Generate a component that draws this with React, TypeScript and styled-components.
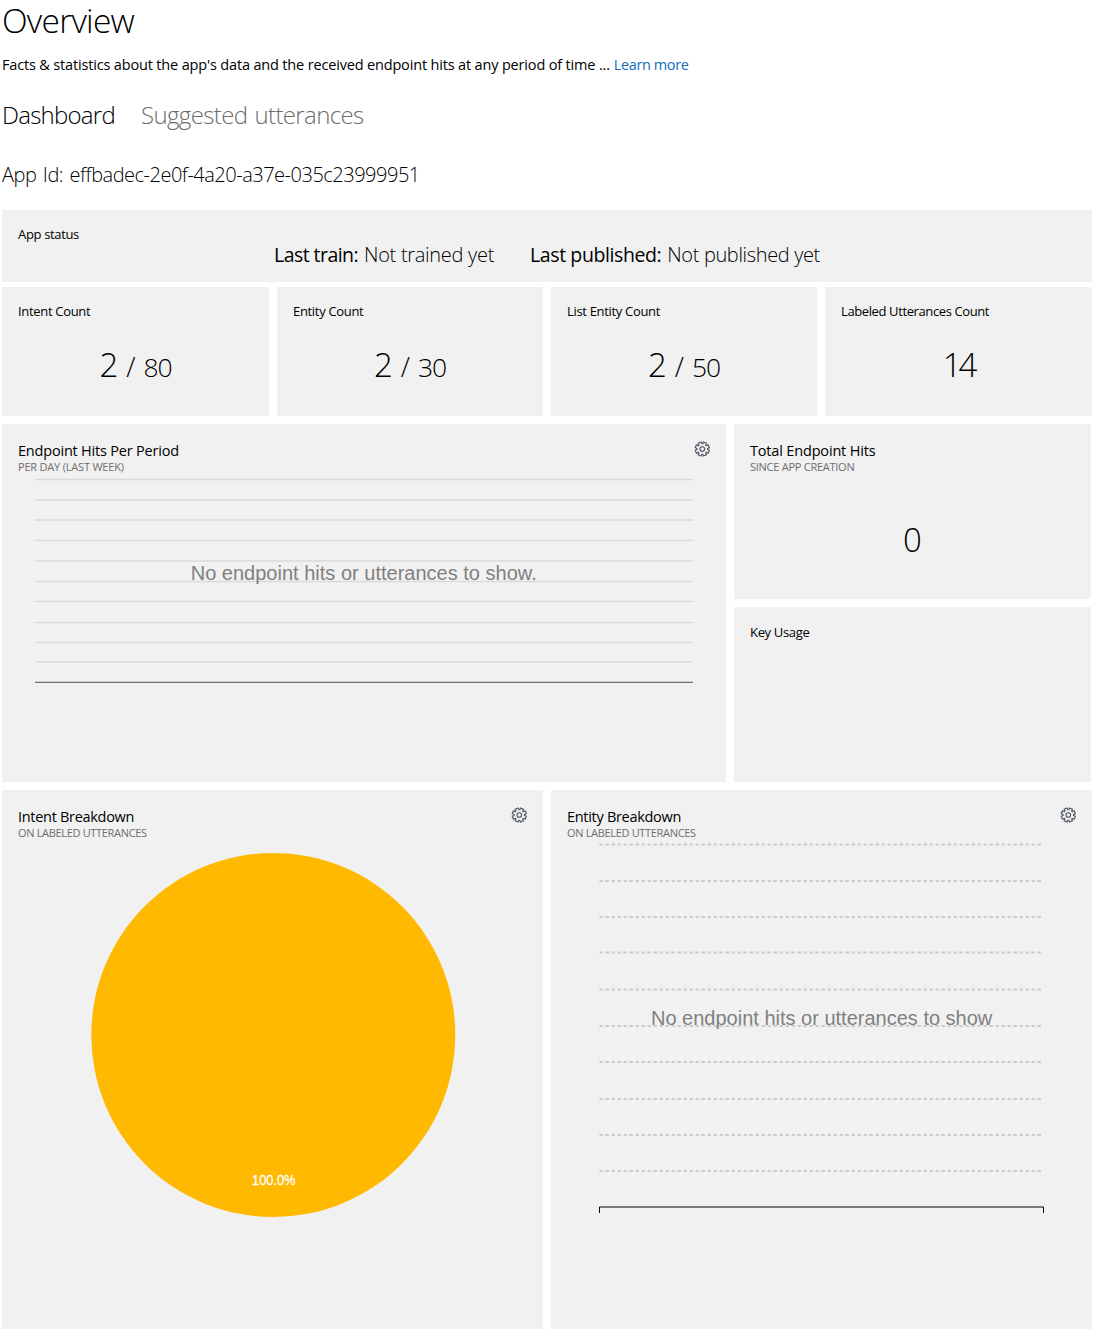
import React from "react";
import styled, { createGlobalStyle } from "styled-components";

const Global = createGlobalStyle`
  * { box-sizing: border-box; }
  html, body { margin: 0; background: #fff; }
  body { font-family: "Open Sans", "Noto Sans", sans-serif; color: #000; }
  h1, h2, p { margin: 0; font-weight: 400; }
`;

const Page = styled.main`
  width: 1094px;
  height: 1336px;
  padding: 0 2px;
  white-space: nowrap;
`;
const Text = styled.span<{ $size: number; $weight?: number; $spacing?: number; $words?: number; $color?: string }>`
  font-size: ${(p) => p.$size}px;
  font-weight: ${(p) => p.$weight ?? 400};
  letter-spacing: ${(p) => p.$spacing ?? 0}px;
  word-spacing: ${(p) => p.$words ?? 0}px;
  color: ${(p) => p.$color ?? "inherit"};
`;
const Title = styled.h1`
  display: flex;
  height: 55px;
  line-height: 40px;
`;
const Intro = styled.p`
  display: flex;
  gap: 4px;
  height: 44px;
  line-height: 20px;
`;
const Link = styled.a`
  display: flex;
  color: #0f6fbe;
`;
const Tabs = styled.nav`
  display: flex;
  gap: 26px;
  height: 62px;
  line-height: 31px;
`;
const AppId = styled.p`
  display: flex;
  height: 49px;
  line-height: 28px;
`;
const Card = styled.section<{ $height?: number }>`
  display: flex;
  flex-direction: column;
  height: ${(p) => (p.$height ? `${p.$height}px` : "auto")};
  padding: 14px 16px 0;
  background: #f1f1f1;
`;
const Label = styled.h2<{ $drop?: number }>`
  display: flex;
  height: 20px;
  margin-top: ${(p) => p.$drop ?? 0}px;
  line-height: 20px;
`;
const Status = styled.div`
  display: flex;
  justify-content: center;
  gap: 36px;
  margin-top: -1px;
  line-height: 24px;
`;
const StatusItem = styled.div`
  display: flex;
  gap: 6px;
`;
const Row = styled.div<{ $cols: string; $top?: number; $height: number }>`
  display: grid;
  grid-template-columns: ${(p) => p.$cols};
  grid-template-rows: 100%;
  gap: 8px;
  height: ${(p) => p.$height}px;
  margin-top: ${(p) => p.$top ?? 8}px;
`;
const Stack = styled.div`
  display: grid;
  grid-template-rows: 1fr 1fr;
  gap: 8px;
`;
const Count = styled.div<{ $top: number }>`
  display: flex;
  justify-content: center;
  align-items: baseline;
  gap: 8px;
  margin-top: ${(p) => p.$top}px;
  line-height: 46px;
`;
const Head = styled.header`
  display: flex;
  justify-content: space-between;
  height: 36px;
  padding-top: 3px;
`;
const Heading = styled.div`
  display: flex;
  flex-direction: column;
`;
const HeadTitle = styled.h2`
  display: flex;
  height: 19px;
  line-height: 19px;
`;
const SubTitle = styled.p`
  display: flex;
  height: 14px;
  line-height: 14px;
`;
const Chart = styled.svg`
  display: block;
  overflow: visible;
`;
const GearIcon = styled.svg`
  display: block;
  width: 16px;
  height: 16px;
  margin-top: 0.4px;
`;

const TEETH = 8;
const gearPath =
  Array.from({ length: TEETH }, (_, i) => {
    const angle = ((i + 0.5) * 2 * Math.PI) / TEETH - Math.PI / 2;
    const corners = [[7.2, -0.23], [7.2, 0.23], [5.2, 0.3], [5.2, 0.485]];
    return corners
      .map(([r, o]) => `${(8.3 + r * Math.cos(angle + o)).toFixed(2)} ${(8 + r * Math.sin(angle + o)).toFixed(2)}`)
      .join("L");
  }).reduce((path, part) => `${path}${path ? "L" : "M"}${part}`, "") + "Z";

function Gear() {
  return (
    <GearIcon viewBox="0 0 16 16" fill="none" stroke="#4a525e" strokeWidth="1.1" strokeLinejoin="round">
      <path d={gearPath} />
      <circle cx="8.3" cy="8" r="2.3" />
    </GearIcon>
  );
}

function CardHead({ title, sub, s1, s2, gear }: { title: string; sub: string; s1: number; s2: number; gear?: boolean }) {
  return (
    <Head>
      <Heading>
        <HeadTitle><Text $size={14.5} $spacing={s1}>{title}</Text></HeadTitle>
        <SubTitle><Text $size={11} $spacing={s2} $color="#6e6e6e">{sub}</Text></SubTitle>
      </Heading>
      {gear && <Gear />}
    </Head>
  );
}

function CountCard({ label, value, limit, spacing = -0.32 }: { label: string; value: string; limit?: string; spacing?: number }) {
  return (
    <Card>
      <Label><Text $size={13} $spacing={spacing}>{label}</Text></Label>
      <Count $top={21}>
        <Text $size={33} $weight={300} $spacing={limit ? 0 : -3}>{value}</Text>
        {limit && (
          <>
            <Text $size={27} $weight={300}>/</Text>
            <Text $size={26.5} $weight={300} $spacing={-1.1}>{limit}</Text>
          </>
        )}
      </Count>
    </Card>
  );
}

const hitLines = [479.5, 500, 520, 540.5, 561, 581.5, 601.5, 622.5, 642.5, 662];
const entityLines = [844.5, 881, 917, 952.5, 989.5, 1026, 1062, 1099, 1135, 1171];

export default function App() {
  return (
    <Page>
      <Global />
      <Title><Text $size={33.5} $weight={300} $spacing={-0.75}>Overview</Text></Title>
      <Intro>
        <Text $size={14.5} $spacing={-0.165}>Facts &amp; statistics about the app's data and the received endpoint hits at any period of time ...</Text>
        <Link><Text $size={14.5} $spacing={-0.4}>Learn more</Text></Link>
      </Intro>
      <Tabs>
        <Text $size={24} $weight={300} $spacing={-0.75}>Dashboard</Text>
        <Text $size={24} $weight={300} $spacing={-0.63} $words={1.5} $color="#6c6c6c">Suggested utterances</Text>
      </Tabs>
      <AppId><Text $size={20} $weight={300} $spacing={-0.49} $words={1.8}>App Id: effbadec-2e0f-4a20-a37e-035c23999951</Text></AppId>
      <Card $height={72}>
        <Label><Text $size={13} $spacing={-0.34}>App status</Text></Label>
        <Status>
          <StatusItem>
            <Text $size={19.5} $spacing={-0.56}>Last train:</Text>
            <Text $size={20} $weight={300} $spacing={-0.29}>Not trained yet</Text>
          </StatusItem>
          <StatusItem>
            <Text $size={19.5} $spacing={-0.4}>Last published:</Text>
            <Text $size={20} $weight={300} $spacing={-0.36}>Not published yet</Text>
          </StatusItem>
        </Status>
      </Card>
      <Row $cols="267px 266px 266px 267px" $top={5} $height={129}>
        <CountCard label="Intent Count" value="2" limit="80" />
        <CountCard label="Entity Count" value="2" limit="30" />
        <CountCard label="List Entity Count" value="2" limit="50" />
        <CountCard label="Labeled Utterances Count" value="14" spacing={-0.39} />
      </Row>
      <Row $cols="724px 357px" $height={358}>
        <Card>
          <CardHead title="Endpoint Hits Per Period" sub="PER DAY (LAST WEEK)" s1={-0.2} s2={-0.2} gear />
          <Chart width="692" height="240" viewBox="18 474 692 240">
            {hitLines.map((y) => <path key={y} d={`M35 ${y}H693`} stroke="#dadada" strokeWidth="1.5" />)}
            <path d="M35 682.3H693" stroke="#707070" strokeWidth="1.3" />
            <text x="190.7" y="580" textLength="346" fontFamily="Liberation Sans, sans-serif" fontSize="20" fill="#808080">No endpoint hits or utterances to show.</text>
          </Chart>
        </Card>
        <Stack>
          <Card>
            <CardHead title="Total Endpoint Hits" sub="SINCE APP CREATION" s1={-0.17} s2={-0.26} />
            <Count $top={43}><Text $size={33} $weight={300}>0</Text></Count>
          </Card>
          <Card><Label $drop={0.6}><Text $size={13} $spacing={-0.33}>Key Usage</Text></Label></Card>
        </Stack>
      </Row>
      <Row $cols="1fr 1fr" $height={539}>
        <Card>
          <CardHead title="Intent Breakdown" sub="ON LABELED UTTERANCES" s1={-0.3} s2={-0.33} gear />
          <Chart width="509" height="400" viewBox="18 840 509 400">
            <circle cx="273.3" cy="1035" r="182" fill="#ffb900" />
            <text x="252" y="1185" textLength="43.5" lengthAdjust="spacingAndGlyphs" fontFamily="Liberation Sans, sans-serif" fontSize="13.8" fill="#fff" stroke="#fff" strokeWidth="0.3">100.0%</text>
          </Chart>
        </Card>
        <Card>
          <CardHead title="Entity Breakdown" sub="ON LABELED UTTERANCES" s1={-0.3} s2={-0.33} gear />
          <Chart width="509" height="400" viewBox="567 840 509 400">
            {entityLines.map((y) => <path key={y} d={`M599.5 ${y}H1041`} stroke="#cbcbcb" strokeWidth="2" strokeDasharray="3.4 2.6" />)}
            <path d="M599.5 1213V1207H1043.5V1213" fill="none" stroke="#000" strokeWidth="1" />
            <text x="651" y="1025" fontFamily="Liberation Sans, sans-serif" fontSize="20" fill="#808080">No endpoint hits or utterances to show</text>
          </Chart>
        </Card>
      </Row>
    </Page>
  );
}
